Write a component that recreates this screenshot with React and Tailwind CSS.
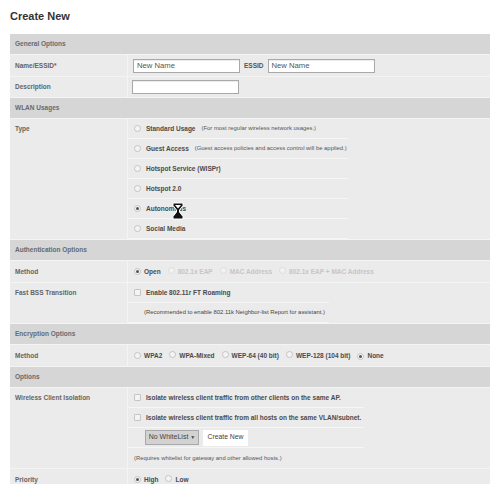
import { useState } from "react";

function Radio({ checked, disabled }) {
  return (
    <span
      className={
        "inline-flex items-center justify-center w-[7px] h-[7px] rounded-full border shrink-0 " +
        (disabled ? "border-[#dcdcdc] bg-[#f2f2f2]" : "border-[#c4c4c4] bg-[#f4f4f4]")
      }
    >
      {checked && <span className="w-[3px] h-[3px] rounded-full bg-[#555]" />}
    </span>
  );
}

function Check() {
  return <span className="inline-block w-[7px] h-[7px] border border-[#c4c4c4] bg-[#f4f4f4] rounded-[1px] shrink-0" />;
}

function Header({ children }) {
  return (
    <div className="h-[21px] flex items-center px-[5px] bg-[#d6d6d6] border-b border-[#f4f4f4] text-[6.5px] font-bold text-[#646b72]">
      {children}
    </div>
  );
}

function Row({ label, children, h = "h-[21px]" }) {
  return (
    <div className="flex bg-[#ebebeb] border-b border-[#f4f4f4]">
      <div className="w-[118px] shrink-0 border-r border-[#f4f4f4]">
        <div className={h + " flex items-center px-[5px] text-[6.5px] font-bold text-[#646464]"}>{label}</div>
      </div>
      <div className="flex-1 min-w-0">{children}</div>
    </div>
  );
}

function Sub({ children, w = "w-[220px]", last, className = "" }) {
  return (
    <div
      className={
        w + " h-[20px] flex items-center gap-[4px] pl-[6px] " + (last ? "" : "border-b border-[#f6f6f6] ") + className
      }
    >
      {children}
    </div>
  );
}

function Input({ value }) {
  return (
    <div className="w-[107px] h-[14px] bg-white border border-[#a9a9a9] shadow-[inset_0_1px_1px_rgba(0,0,0,0.08)] flex items-center px-[3px] text-[7.7px] text-[#555] font-normal">
      {value}
    </div>
  );
}

export default function App() {
  const [type] = useState("Autonomous");

  const types = [
    ["Standard Usage", "(For most regular wireless network usages.)"],
    ["Guest Access", "(Guest access policies and access control will be applied.)"],
    ["Hotspot Service (WISPr)", ""],
    ["Hotspot 2.0", ""],
    ["Autonomous", ""],
    ["Social Media", ""],
  ];

  return (
    <div className="relative w-[490px] h-[484px] overflow-hidden bg-white font-['Liberation_Sans',Arial,sans-serif] text-[#444]">
      <div className="h-[34px] flex items-center pl-[10px] pb-[2px] text-[11px] font-bold text-[#333]">Create New</div>

      <div className="ml-[10px]">
        <Header>General Options</Header>
        <Row label="Name/ESSID*" h="h-[21px]">
          <div className="h-[21px] flex items-center gap-[4px] pl-[5px]">
            <Input value="New Name" />
            <span className="text-[6.5px] font-bold text-[#555]">ESSID</span>
            <Input value="New Name" />
          </div>
        </Row>
        <Row label="Description" h="h-[20px]">
          <div className="h-[20px] flex items-center pl-[4px]">
            <Input value="" />
          </div>
        </Row>

        <Header>WLAN Usages</Header>
        <Row label="Type" h="h-[20px]">
          {types.map(([t, d]) => (
            <Sub key={t} className="gap-[5px]">
              <Radio checked={t === type} />
              <span className="text-[6.5px] font-bold text-[#4a4a4a] whitespace-nowrap">{t}</span>
              {d && <span className="text-[5.9px] text-[#555] whitespace-nowrap ml-[1px]">{d}</span>}
            </Sub>
          ))}
        </Row>

        <Header>Authentication Options</Header>
        <Row label="Method">
          <div className="h-[21px] flex items-center pl-[6px] text-[6.5px] font-bold whitespace-nowrap">
            <Radio checked />
            <span className="ml-[3px] text-[#4a4a4a]">Open</span>
            <span className="ml-[7px]"><Radio disabled /></span>
            <span className="ml-[3px] text-[#cbc3c3]">802.1x EAP</span>
            <span className="ml-[7px]"><Radio disabled /></span>
            <span className="ml-[3px] text-[#cbc3c3]">MAC Address</span>
            <span className="ml-[7px]"><Radio disabled /></span>
            <span className="ml-[3px] text-[#cbc3c3]">802.1x EAP + MAC Address</span>
          </div>
        </Row>
        <Row label="Fast BSS Transition" h="h-[20px]">
          <Sub w="w-[201px]" className="gap-[5px]">
            <Check />
            <span className="text-[6.5px] font-bold text-[#4a4a4a]">Enable 802.11r FT Roaming</span>
          </Sub>
          <Sub w="w-[201px]" className="pl-[16px]">
            <span className="text-[5.9px] text-[#444] whitespace-nowrap">
              (Recommended to enable 802.11k Neighbor-list Report for assistant.)
            </span>
          </Sub>
        </Row>

        <Header>Encryption Options</Header>
        <Row label="Method" h="h-[21px]">
          <div className="h-[21px] flex items-center pl-[6px] text-[6.5px] font-bold text-[#4a4a4a] whitespace-nowrap">
            <Radio />
            <span className="ml-[3px]">WPA2</span>
            <span className="ml-[7px]"><Radio /></span>
            <span className="ml-[3px]">WPA-Mixed</span>
            <span className="ml-[7px]"><Radio /></span>
            <span className="ml-[3px]">WEP-64 (40 bit)</span>
            <span className="ml-[7px]"><Radio /></span>
            <span className="ml-[3px]">WEP-128 (104 bit)</span>
            <span className="ml-[7px]"><Radio checked /></span>
            <span className="ml-[3px]">None</span>
          </div>
        </Row>

        <Header>Options</Header>
        <Row label="Wireless Client Isolation" h="h-[20px]">
          <Sub w="w-[236px]" className="gap-[5px]">
            <Check />
            <span className="text-[6.5px] font-bold text-[#4a4a4a] whitespace-nowrap">
              Isolate wireless client traffic from other clients on the same AP.
            </span>
          </Sub>
          <Sub w="w-[236px]" className="gap-[5px]">
            <Check />
            <span className="text-[6.5px] font-bold text-[#4a4a4a] whitespace-nowrap">
              Isolate wireless client traffic from all hosts on the same VLAN/subnet.
            </span>
          </Sub>
          <Sub w="w-[236px]" className="pl-[17px] gap-[4px]">
            <div className="h-[15px] w-[54px] justify-center flex items-center bg-[#d2d2d2] border border-[#a8a8a8] text-[7px] text-[#444] whitespace-nowrap">
              No WhiteList <span className="ml-[2px] text-[5px]">▼</span>
            </div>
            <div className="h-[16px] w-[45px] justify-center flex items-center bg-white text-[6.8px] text-[#444] whitespace-nowrap">
              Create New
            </div>
          </Sub>
          <Sub w="w-[236px]" className="pl-[2px]" last>
            <span className="text-[5.9px] text-[#555] whitespace-nowrap">
              (Requires whitelist for gateway and other allowed hosts.)
            </span>
          </Sub>
        </Row>
        <Row label="Priority" h="h-[21px]">
          <div className="h-[21px] flex items-center pl-[6px] text-[6.5px] font-bold text-[#4a4a4a]">
            <Radio checked />
            <span className="ml-[3px]">High</span>
            <span className="ml-[7px]"><Radio /></span>
            <span className="ml-[3px]">Low</span>
          </div>
        </Row>
      </div>

      {/* busy cursor */}
      <svg className="absolute left-[172px] top-[202px]" width="12" height="18" viewBox="0 0 12 18">
        <path d="M1 1h10v2.5L7.5 8v2l3.5 4.5V17H1v-2.5L4.5 10V8L1 3.5z" fill="#111" stroke="#fff" strokeWidth="1" />
        <path d="M3 3h6L6 6.5z" fill="#fff" />
      </svg>
    </div>
  );
}
